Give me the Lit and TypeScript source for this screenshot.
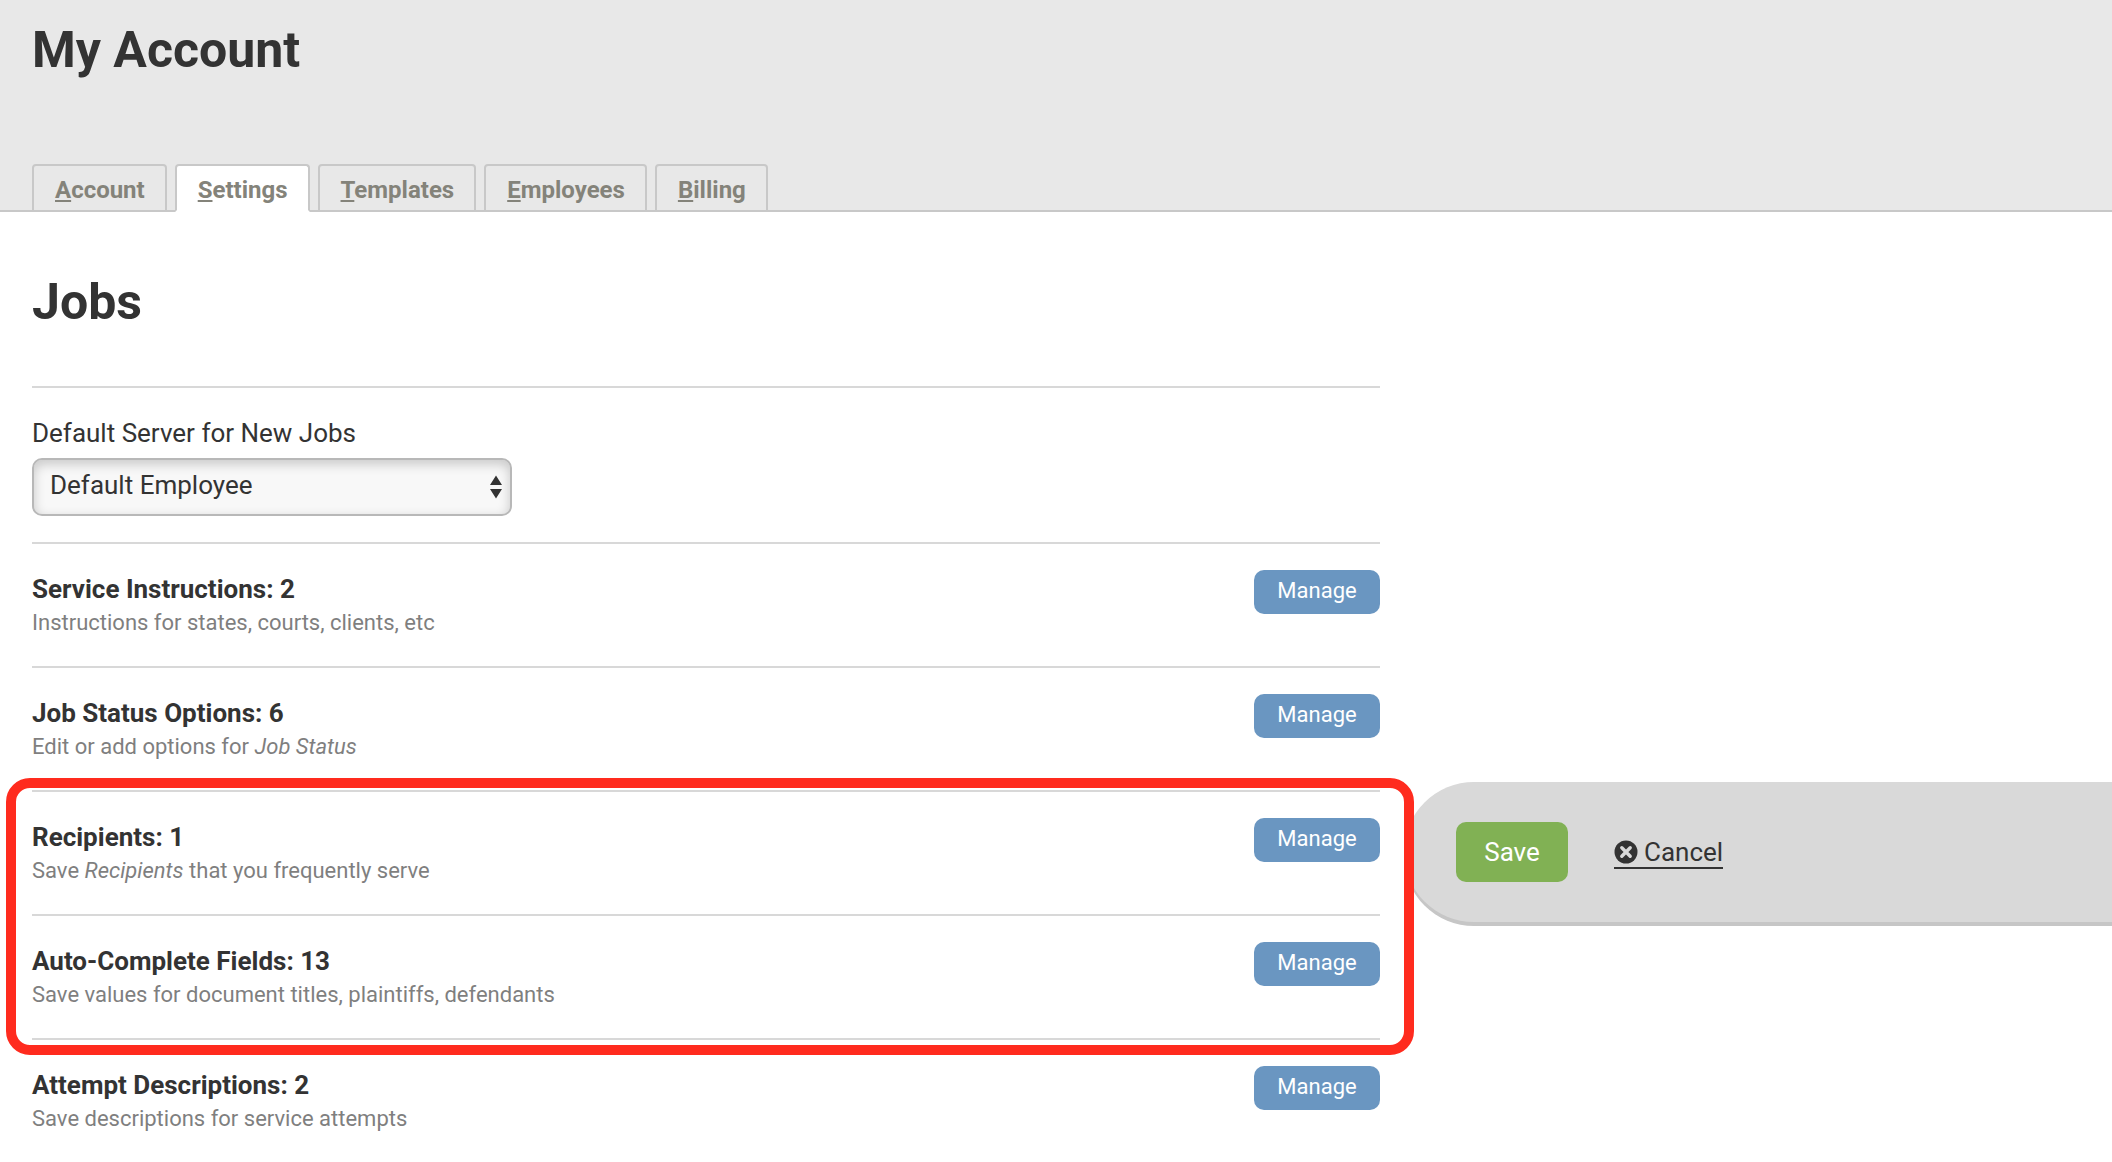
import { LitElement, html, css, type TemplateResult } from "lit";
import { customElement, property } from "lit/decorators.js";
import { classMap } from "lit/directives/class-map.js";

interface Tab {
  id: string;
  label: string;
}

interface Setting {
  title: string;
  count: number;
  description: TemplateResult;
}

const TABS: Tab[] = [
  { id: "account", label: "Account" },
  { id: "settings", label: "Settings" },
  { id: "templates", label: "Templates" },
  { id: "employees", label: "Employees" },
  { id: "billing", label: "Billing" },
];

const GENERAL: Setting[] = [
  {
    title: "Service Instructions",
    count: 2,
    description: html`Instructions for states, courts, clients, etc`,
  },
  {
    title: "Job Status Options",
    count: 6,
    description: html`Edit or add options for <em>Job Status</em>`,
  },
];

const HIGHLIGHTED: Setting[] = [
  {
    title: "Recipients",
    count: 1,
    description: html`Save <em>Recipients</em> that you frequently serve`,
  },
  {
    title: "Auto-Complete Fields",
    count: 13,
    description: html`Save values for document titles, plaintiffs, defendants`,
  },
];

const ATTEMPTS: Setting[] = [
  {
    title: "Attempt Descriptions",
    count: 2,
    description: html`Save descriptions for service attempts`,
  },
];

@customElement("setting-row")
export class SettingRow extends LitElement {
  @property({ attribute: false }) setting!: Setting;

  static styles = css`
    :host {
      display: flex;
      justify-content: space-between;
      align-items: flex-start;
      gap: 24px;
      border-top: 2px solid #d8d8d8;
      padding: 26px 0 30px;
    }
    .text {
      padding-top: 4px;
    }
    .title {
      margin: 0;
      font-size: 26px;
      line-height: 30px;
      font-weight: 700;
    }
    .description {
      margin: 6px 0 0;
      font-size: 22px;
      line-height: 26px;
      color: #7f7f7f;
    }
    .manage {
      flex: none;
      min-width: 126px;
      height: 44px;
      border: 0;
      border-radius: 10px;
      padding: 0 22px 2px;
      background: #6a96c1;
      color: #fff;
      font: 400 22px/26px Roboto, sans-serif;
      cursor: pointer;
    }
  `;

  render() {
    const { title, count, description } = this.setting;
    return html`
      <div class="text">
        <h3 class="title">${title}: ${count}</h3>
        <p class="description">${description}</p>
      </div>
      <button class="manage" type="button" aria-label="Manage ${title}">Manage</button>
    `;
  }
}

@customElement("app-root")
export class AppRoot extends LitElement {
  @property() activeTab = "settings";

  static styles = css`
    :host {
      display: block;
      overflow: hidden;
      background: #fff;
      color: #333;
      font-family: Roboto, sans-serif;
    }
    .header {
      background: #e8e8e8;
      padding-top: 20px;
    }
    .page-title,
    .section-title {
      margin: 0;
      font-size: 50px;
      line-height: 60px;
      font-weight: 700;
    }
    .page-title {
      padding: 0 32px;
    }
    .tabs {
      display: flex;
      gap: 8px;
      margin-top: 84px;
      padding: 0 32px;
      box-shadow: inset 0 -2px #c8c8c8;
    }
    .tab {
      border: 2px solid #c8c8c8;
      border-radius: 4px 4px 0 0;
      padding: 10px 20px 6px 21px;
      color: #84837a;
      font-size: 24px;
      line-height: 28px;
      font-weight: 700;
      text-decoration: none;
    }
    .tab.active {
      background: #fff;
      border-bottom-color: #fff;
    }
    .key {
      text-decoration: underline;
      text-decoration-thickness: 2px;
      text-underline-offset: 2px;
    }
    .main {
      display: grid;
      grid-template-columns: minmax(0, 1348px) minmax(340px, 1fr);
      gap: 24px;
      padding-left: 32px;
    }
    .jobs {
      padding-top: 60px;
    }
    .default-server {
      display: flex;
      flex-direction: column;
      gap: 10px;
      margin-top: 54px;
      border-top: 2px solid #d8d8d8;
      padding: 30px 0 26px;
      font-size: 26px;
      line-height: 30px;
    }
    .select-box {
      position: relative;
      display: flex;
      max-width: 480px;
    }
    .select {
      appearance: none;
      flex: 1;
      height: 58px;
      margin: 0;
      border: 2px solid #b8b8b8;
      border-radius: 10px;
      padding: 0 40px 4px 16px;
      background: #f8f8f8;
      box-shadow: inset 0 4px 12px rgba(0, 0, 0, 0.2);
      color: #333;
      font: 400 26px/30px Roboto, sans-serif;
    }
    .arrows {
      position: absolute;
      top: 17px;
      right: 10px;
      width: 12px;
      height: 24px;
      fill: #333;
      pointer-events: none;
    }
    .highlight {
      position: relative;
      z-index: 1;
    }
    .highlight::after {
      content: "";
      position: absolute;
      inset: -12px -34px -17px -26px;
      border: 10px solid #ff2b1e;
      border-radius: 24px;
      pointer-events: none;
    }
    .actions {
      align-self: start;
      display: flex;
      align-items: baseline;
      gap: 46px;
      margin-top: 570px;
      border-radius: 70px 0 0 70px;
      padding: 40px 52px;
      background: #d9d9d9;
      box-shadow: 0 4px #c6c6c6;
    }
    .save {
      min-width: 112px;
      height: 60px;
      border: 0;
      border-radius: 10px;
      padding: 0 28px;
      background: #81b154;
      color: #fff;
      font: 400 26px/30px Roboto, sans-serif;
      cursor: pointer;
    }
    .cancel {
      border-bottom: 2px solid #333;
      color: #333;
      font-size: 26px;
      line-height: 30px;
      text-decoration: none;
      white-space: nowrap;
    }
    .cancel-icon {
      width: 24px;
      height: 24px;
      margin-right: 6px;
      vertical-align: -3px;
    }
  `;

  private renderTab(tab: Tab) {
    const active = tab.id === this.activeTab;
    return html`<a
      class=${classMap({ tab: true, active })}
      href="#${tab.id}"
      aria-current=${active ? "page" : "false"}
      ><span class="key">${tab.label[0]}</span>${tab.label.slice(1)}</a
    >`;
  }

  private renderRows(settings: Setting[]) {
    return settings.map((setting) => html`<setting-row .setting=${setting}></setting-row>`);
  }

  render() {
    return html`
      <header class="header">
        <h1 class="page-title">My Account</h1>
        <nav class="tabs">${TABS.map((tab) => this.renderTab(tab))}</nav>
      </header>
      <main class="main">
        <section class="jobs">
          <h2 class="section-title">Jobs</h2>
          <div class="default-server">
            <label for="server">Default Server for New Jobs</label>
            <div class="select-box">
              <select class="select" id="server">
                <option>Default Employee</option>
              </select>
              <svg class="arrows" viewBox="0 0 12 24" aria-hidden="true">
                <path d="M6 0.5 12 10H0ZM0 14h12L6 23.5Z" />
              </svg>
            </div>
          </div>
          ${this.renderRows(GENERAL)}
          <div class="highlight">${this.renderRows(HIGHLIGHTED)}</div>
          ${this.renderRows(ATTEMPTS)}
        </section>
        <aside class="actions">
          <button class="save" type="button">Save</button>
          <a class="cancel" href="#cancel"
            ><svg class="cancel-icon" viewBox="0 0 24 24" aria-hidden="true">
              <circle cx="12" cy="12" r="11.5" fill="#333" />
              <path
                d="M7.8 7.8l8.4 8.4M16.2 7.8l-8.4 8.4"
                stroke="#d9d9d9"
                stroke-width="3.4"
                stroke-linecap="round"
              /></svg
            >Cancel</a
          >
        </aside>
      </main>
    `;
  }
}
